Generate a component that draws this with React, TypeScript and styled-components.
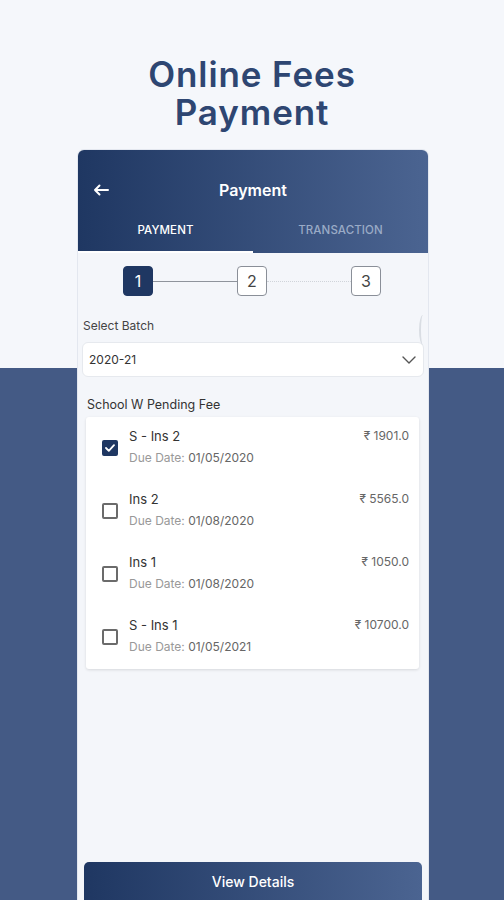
import React from "react";
import styled, { createGlobalStyle } from "styled-components";

const Global = createGlobalStyle`
  html, body { margin: 0; padding: 0; }
  body {
    font-family: "Inter", "Open Sans", sans-serif;
    background: linear-gradient(to bottom, #f5f7fb 0, #f5f7fb 368px, #445a85 368px, #445a85 100%);
    min-height: 900px;
  }
`;

const Page = styled.div`
  width: 504px;
  height: 900px;
  overflow: hidden;
  display: flex;
  flex-direction: column;
  align-items: center;
`;

const Title = styled.h1`
  margin: 55px 0 0;
  font-size: 35px;
  line-height: 38px;
  font-weight: 600;
  color: #2e4672;
  text-align: center;
  letter-spacing: 0.9px;
`;

const Phone = styled.div`
  margin-top: 19px;
  margin-left: 2px;
  width: 350px;
  flex: 1;
  background: #f4f6fa;
  border-radius: 6px 6px 0 0;
  box-shadow: 0 0 0 1px #e3e7ef;
  display: flex;
  flex-direction: column;
  overflow: hidden;
`;

const Header = styled.div`
  height: 103px;
  background: linear-gradient(to right, #1f3762, #4b6491);
  display: flex;
  flex-direction: column;
  color: #fff;
`;

const TopBar = styled.div`
  height: 73px;
  display: grid;
  grid-template-columns: 44px 1fr 44px;
  align-items: center;
  padding-top: 7px;
  box-sizing: border-box;
`;

const Back = styled.div`
  display: flex;
  justify-content: center;
  padding-left: 2px;
`;

const HeaderTitle = styled.div`
  text-align: center;
  font-size: 16px;
  font-weight: 600;
`;

const Tabs = styled.div`
  flex: 1;
  display: grid;
  grid-template-columns: 175px 175px;
`;

const Tab = styled.div<{ $active?: boolean }>`
  display: flex;
  align-items: flex-start;
  justify-content: center;
  font-size: 11.5px;
  line-height: 14px;
  font-weight: 500;
  letter-spacing: 0.1px;
  color: ${(p) => (p.$active ? "#ffffff" : "#9aabc6")};
  border-bottom: 2px solid ${(p) => (p.$active ? "#ffffff" : "transparent")};
`;

const Body = styled.div`
  flex: 1;
  display: flex;
  flex-direction: column;
  padding: 13px 4px 0 4px;
`;

const Stepper = styled.div`
  display: flex;
  align-items: center;
  padding-left: 41px;
`;

const Step = styled.div<{ $active?: boolean }>`
  width: 30px;
  height: 30px;
  box-sizing: border-box;
  border-radius: 4px;
  display: flex;
  align-items: center;
  justify-content: center;
  font-size: 16px;
  color: ${(p) => (p.$active ? "#fff" : "#444")};
  background: ${(p) => (p.$active ? "#1f3762" : "#fff")};
  border: 1.5px solid ${(p) => (p.$active ? "#1f3762" : "#8a8f98")};
`;

const Connector = styled.div<{ $dotted?: boolean }>`
  width: 84px;
  height: 0;
  border-top: 1.5px ${(p) => (p.$dotted ? "dotted #d0d4da" : "solid #8f949c")};
`;

const Label = styled.div`
  margin-top: 22px;
  margin-left: 1px;
  font-size: 12px;
  color: #444;
`;

const Select = styled.div`
  margin-top: 9px;
  height: 35px;
  box-sizing: border-box;
  background: #fff;
  border: 1px solid #e6e9ee;
  border-radius: 6px;
  display: flex;
  align-items: center;
  justify-content: space-between;
  padding: 0 7px 0 6px;
  font-size: 12px;
  color: #333;
`;

const Section = styled.div`
  margin-top: 20px;
  margin-left: 5px;
  font-size: 12.5px;
  color: #333;
`;

const List = styled.div`
  margin: 5px 5px 0 4px;
  background: #fff;
  border-radius: 3px;
  box-shadow: 0 1px 3px rgba(0, 0, 0, 0.12);
  display: flex;
  flex-direction: column;
`;

const Row = styled.div`
  height: 63px;
  box-sizing: border-box;
  padding: 9px 10px 0 0;
  display: grid;
  grid-template-columns: 42px 1fr auto;
  align-items: start;
`;

const CheckCell = styled.div`
  padding-top: 14px;
  display: flex;
  justify-content: flex-end;
  padding-right: 10px;
`;

const Box = styled.div<{ $checked?: boolean }>`
  width: 16px;
  height: 16px;
  box-sizing: border-box;
  border-radius: 2px;
  border: 2px solid ${(p) => (p.$checked ? "#1f3762" : "#6b6b6b")};
  background: ${(p) => (p.$checked ? "#1f3762" : "#fff")};
  display: flex;
  align-items: center;
  justify-content: center;
`;

const Info = styled.div`
  display: flex;
  flex-direction: column;
  padding-left: 1px;
`;

const ItemName = styled.div`
  font-size: 13px;
  color: #333;
  line-height: 20px;
`;

const Due = styled.div`
  margin-top: 4px;
  font-size: 12px;
  color: #999;
  line-height: 16px;
  span { color: #666; }
`;

const Amount = styled.div`
  font-size: 12px;
  color: #666;
  line-height: 20px;
`;

const Spacer = styled.div`
  flex: 1;
`;

const Button = styled.div`
  margin: 0 2px;
  height: 38px;
  border-radius: 5px 5px 0 0;
  background: linear-gradient(to right, #1f3762, #4b6491);
  color: #fff;
  font-size: 14px;
  font-weight: 500;
  display: flex;
  justify-content: center;
  padding-top: 11px;
  box-sizing: border-box;
`;

const SelectWrap = styled.div`
  position: relative;
`;

const Scroll = styled.div`
  position: absolute;
  right: -3px;
  top: -18px;
  width: 6px;
  height: 30px;
  border-left: 2px solid #d9dde3;
  border-radius: 50%;
`;

const items = [
  { name: "S - Ins 2", date: "01/05/2020", amount: "₹ 1901.0", checked: true },
  { name: "Ins 2", date: "01/08/2020", amount: "₹ 5565.0" },
  { name: "Ins 1", date: "01/08/2020", amount: "₹ 1050.0" },
  { name: "S - Ins 1", date: "01/05/2021", amount: "₹ 10700.0" },
];

export default function App() {
  return (
    <>
      <Global />
      <Page>
        <Title>
          Online Fees
          <br />
          Payment
        </Title>
        <Phone>
          <Header>
            <TopBar>
              <Back>
                <svg width="16" height="12" viewBox="0 0 16 12" fill="none">
                  <path d="M15 6H2M6.5 1.5L2 6l4.5 4.5" stroke="#fff" strokeWidth="2" strokeLinecap="round" strokeLinejoin="round" />
                </svg>
              </Back>
              <HeaderTitle>Payment</HeaderTitle>
              <div />
            </TopBar>
            <Tabs>
              <Tab $active>PAYMENT</Tab>
              <Tab>TRANSACTION</Tab>
            </Tabs>
          </Header>
          <Body>
            <Stepper>
              <Step $active>1</Step>
              <Connector />
              <Step>2</Step>
              <Connector $dotted />
              <Step>3</Step>
            </Stepper>
            <Label>Select Batch</Label>
            <SelectWrap>
              <Scroll />
              <Select>
                <span>2020-21</span>
                <svg width="14" height="8" viewBox="0 0 14 8" fill="none">
                  <path d="M1 1l6 6 6-6" stroke="#555" strokeWidth="1.4" strokeLinecap="round" strokeLinejoin="round" />
                </svg>
              </Select>
            </SelectWrap>
            <Section>School W Pending Fee</Section>
            <List>
              {items.map((it) => (
                <Row key={it.name}>
                  <CheckCell>
                    <Box $checked={it.checked}>
                      {it.checked && (
                        <svg width="10" height="8" viewBox="0 0 10 8" fill="none">
                          <path d="M1 4l2.8 2.8L9 1.2" stroke="#fff" strokeWidth="1.8" strokeLinecap="round" strokeLinejoin="round" />
                        </svg>
                      )}
                    </Box>
                  </CheckCell>
                  <Info>
                    <ItemName>{it.name}</ItemName>
                    <Due>
                      Due Date: <span>{it.date}</span>
                    </Due>
                  </Info>
                  <Amount>{it.amount}</Amount>
                </Row>
              ))}
            </List>
            <Spacer />
            <Button>View Details</Button>
          </Body>
        </Phone>
      </Page>
    </>
  );
}
